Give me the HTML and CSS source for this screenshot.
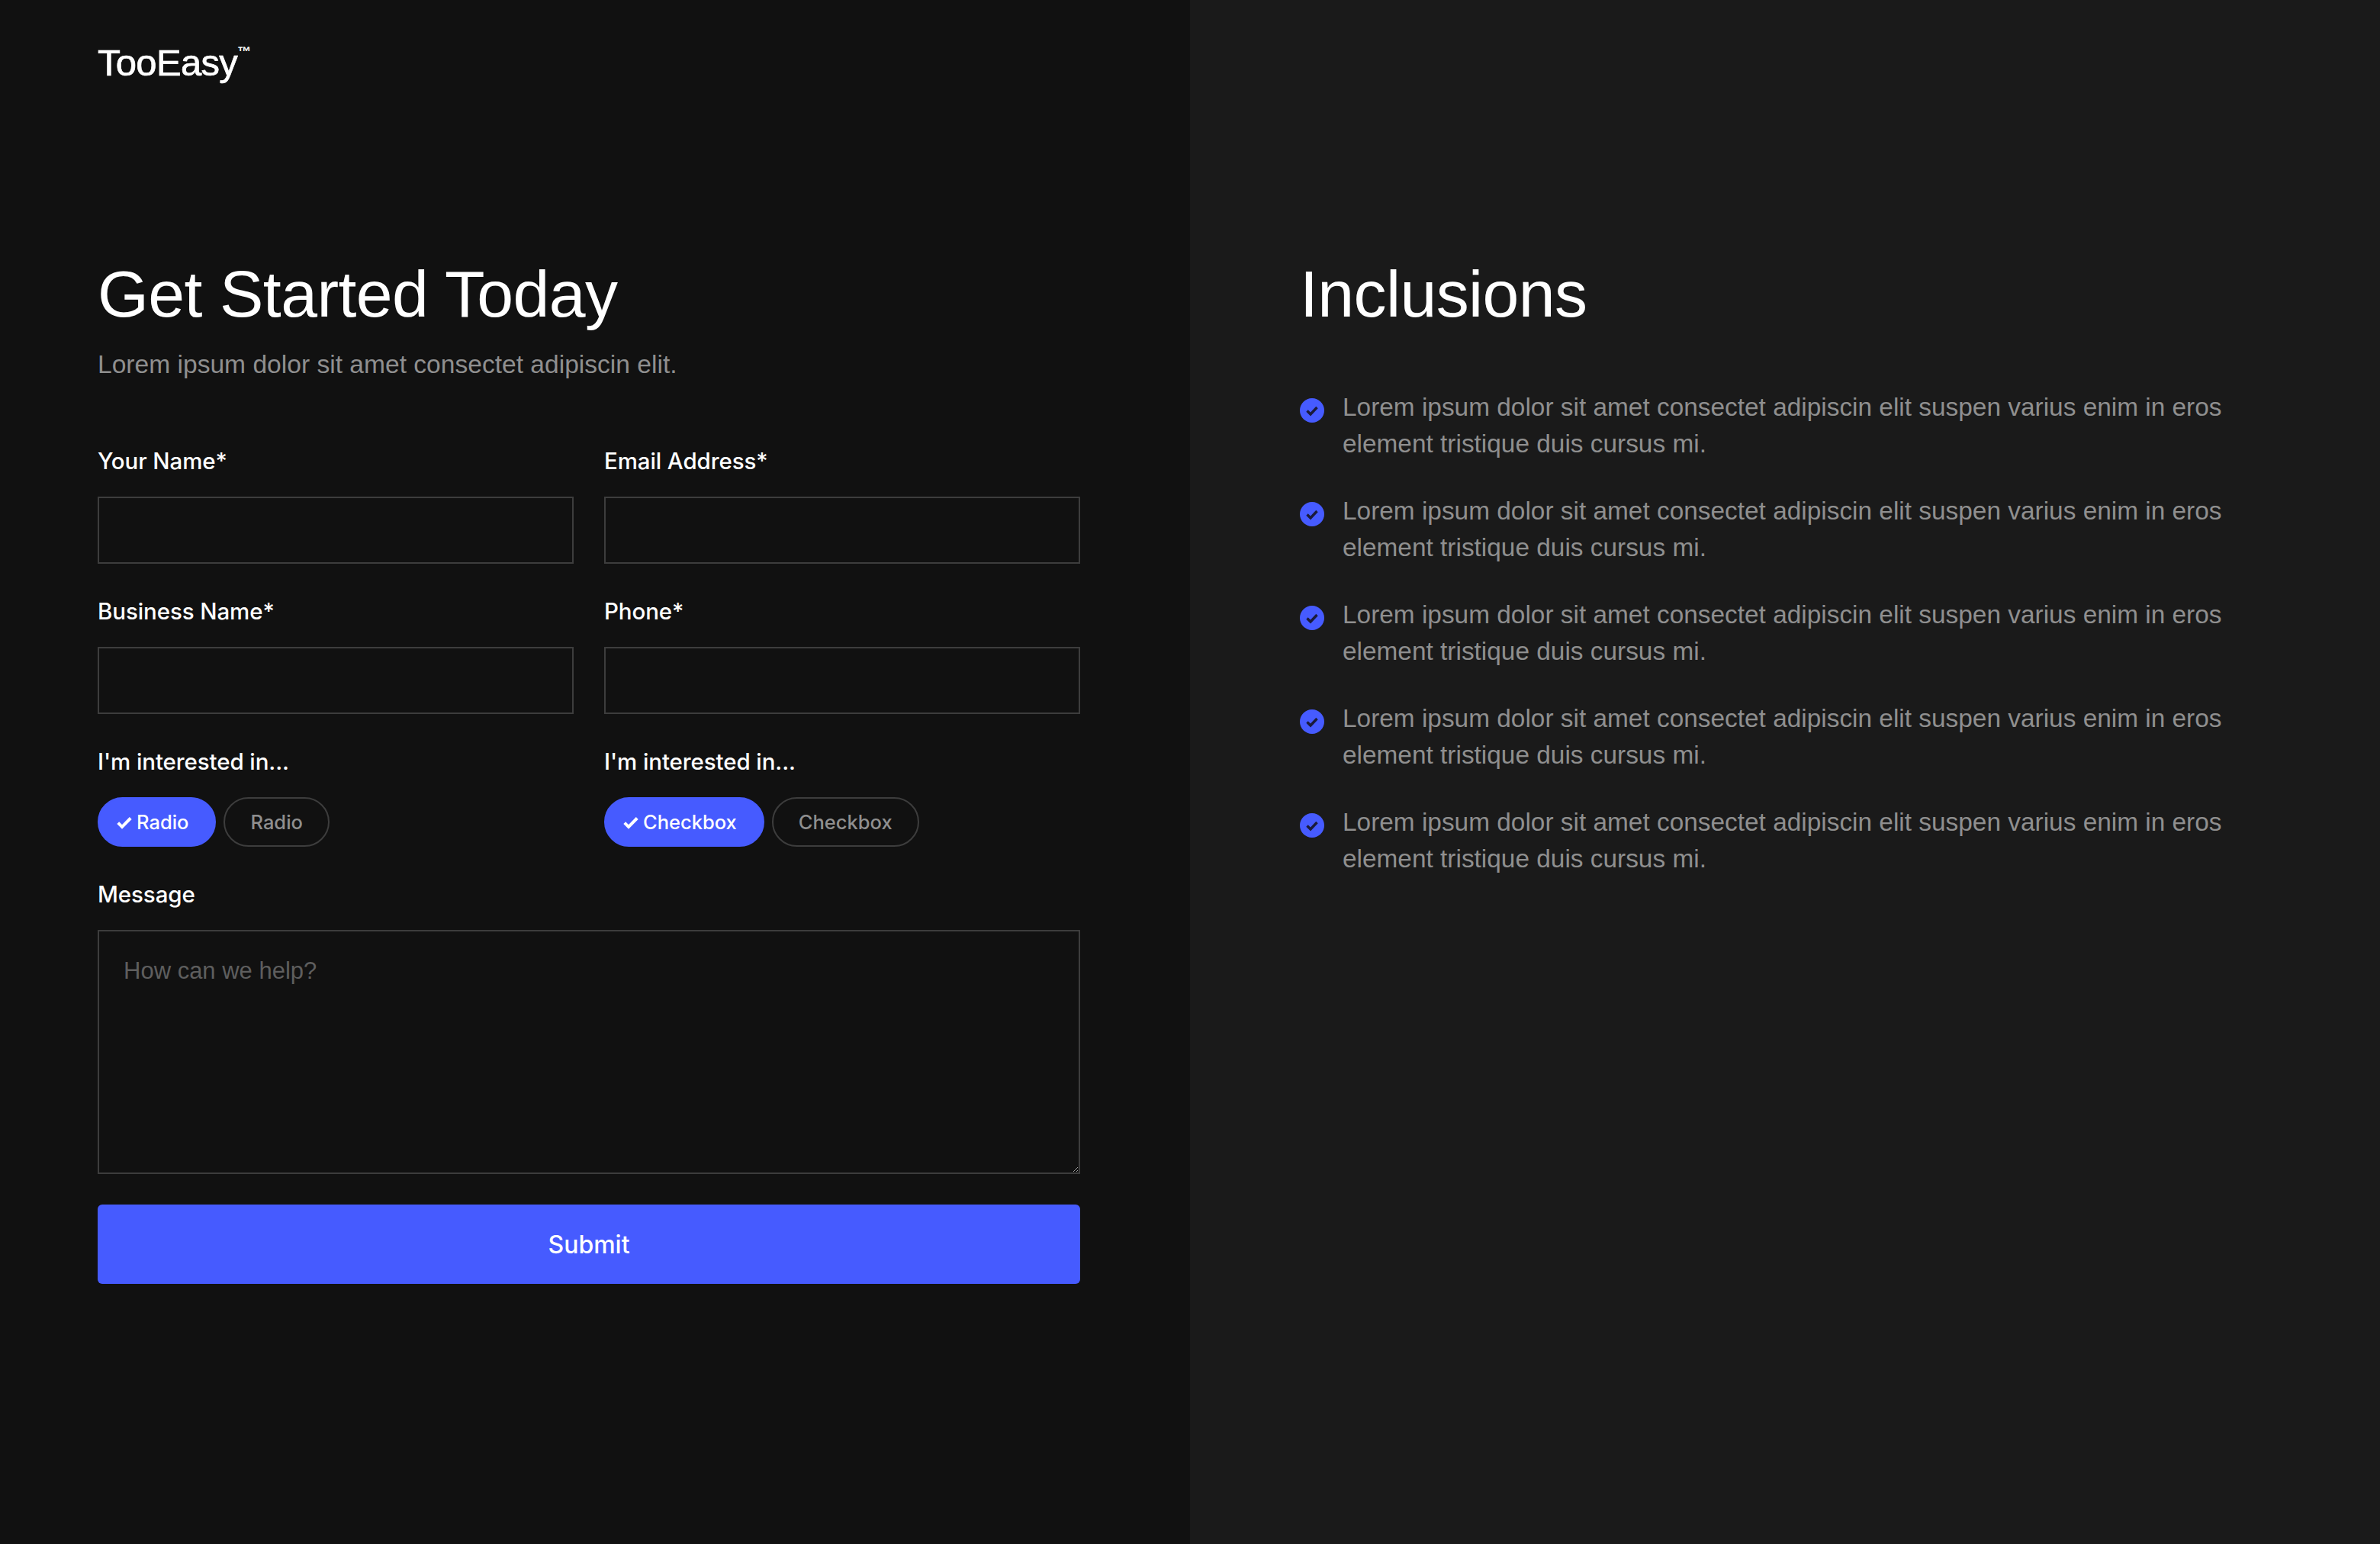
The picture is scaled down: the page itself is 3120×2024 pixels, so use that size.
FILE: index.html
```html
<!DOCTYPE html>
<html lang="en">
<head>
<meta charset="utf-8">
<title>TooEasy</title>
<link rel="stylesheet" href="styles.css">
</head>
<body>
<main class="page">
  <section class="left">
    <div class="logo">TooEasy<sup class="tm">™</sup></div>
    <h1 class="title">Get Started Today</h1>
    <p class="sub">Lorem ipsum dolor sit amet consectet adipiscin elit.</p>
    <form class="form">
      <div class="grid">
        <div class="field"><label class="label">Your Name*</label><input class="input" type="text"></div>
        <div class="field"><label class="label">Email Address*</label><input class="input" type="text"></div>
        <div class="field"><label class="label">Business Name*</label><input class="input" type="text"></div>
        <div class="field"><label class="label">Phone*</label><input class="input" type="text"></div>
        <div class="field">
          <label class="label">I'm interested in...</label>
          <div class="pills">
            <span class="pill on"><svg class="tick" viewBox="0 0 20 20"><path d="M2.5 10.5l4.8 4.8L17.5 5" fill="none" stroke="#fff" stroke-width="3.6"/></svg>Radio</span>
            <span class="pill">Radio</span>
          </div>
        </div>
        <div class="field">
          <label class="label">I'm interested in...</label>
          <div class="pills">
            <span class="pill on"><svg class="tick" viewBox="0 0 20 20"><path d="M2.5 10.5l4.8 4.8L17.5 5" fill="none" stroke="#fff" stroke-width="3.6"/></svg>Checkbox</span>
            <span class="pill">Checkbox</span>
          </div>
        </div>
      </div>
      <div class="field msg">
        <label class="label">Message</label>
        <textarea class="area" placeholder="How can we help?"></textarea>
      </div>
      <button class="submit" type="button">Submit</button>
    </form>
  </section>
  <section class="right">
    <h2 class="title">Inclusions</h2>
    <ul class="list">
      <li class="item"><svg class="check" viewBox="0 0 32 32"><circle cx="16" cy="16" r="16" fill="#465bff"/><path d="M9.5 16.5l4.5 4.5L22.5 12" fill="none" stroke="#1a1a3a" stroke-width="3.4"/></svg><span>Lorem ipsum dolor sit amet consectet adipiscin elit suspen varius enim in eros element tristique duis cursus mi.</span></li>
      <li class="item"><svg class="check" viewBox="0 0 32 32"><circle cx="16" cy="16" r="16" fill="#465bff"/><path d="M9.5 16.5l4.5 4.5L22.5 12" fill="none" stroke="#1a1a3a" stroke-width="3.4"/></svg><span>Lorem ipsum dolor sit amet consectet adipiscin elit suspen varius enim in eros element tristique duis cursus mi.</span></li>
      <li class="item"><svg class="check" viewBox="0 0 32 32"><circle cx="16" cy="16" r="16" fill="#465bff"/><path d="M9.5 16.5l4.5 4.5L22.5 12" fill="none" stroke="#1a1a3a" stroke-width="3.4"/></svg><span>Lorem ipsum dolor sit amet consectet adipiscin elit suspen varius enim in eros element tristique duis cursus mi.</span></li>
      <li class="item"><svg class="check" viewBox="0 0 32 32"><circle cx="16" cy="16" r="16" fill="#465bff"/><path d="M9.5 16.5l4.5 4.5L22.5 12" fill="none" stroke="#1a1a3a" stroke-width="3.4"/></svg><span>Lorem ipsum dolor sit amet consectet adipiscin elit suspen varius enim in eros element tristique duis cursus mi.</span></li>
      <li class="item"><svg class="check" viewBox="0 0 32 32"><circle cx="16" cy="16" r="16" fill="#465bff"/><path d="M9.5 16.5l4.5 4.5L22.5 12" fill="none" stroke="#1a1a3a" stroke-width="3.4"/></svg><span>Lorem ipsum dolor sit amet consectet adipiscin elit suspen varius enim in eros element tristique duis cursus mi.</span></li>
    </ul>
  </section>
</main>
</body>
</html>
```
FILE: styles.css
```css
* { box-sizing: border-box; }
html, body { margin: 0; height: 100%; }
body { background: #111; color: #fff; font-family: "Liberation Sans", Arial, sans-serif; }
.page { display: grid; grid-template-columns: 1560px 1560px; min-height: 2024px; }
.left { background: #111; padding: 50px 144px 0 128px; }
.right { background: #1a1a1a; padding: 330px 144px 0 144px; }
.logo { font-size: 49px; line-height: 64px; letter-spacing: -0.7px; height: 280px; -webkit-text-stroke: 0.7px #fff; }
.tm { font-size: 18px; vertical-align: 25px; line-height: 0; letter-spacing: 0; font-weight: 700; -webkit-text-stroke: 0; }
.title { margin: 0; font-size: 86px; line-height: 110px; font-weight: 400; letter-spacing: -0.6px; }
.sub { margin: 14px 0 0; font-size: 33.6px; line-height: 48px; color: #8f8f8f; }
.form { margin-top: 78px; }
.grid { display: grid; grid-template-columns: 624px 624px; column-gap: 40px; row-gap: 38px; }
.field { display: flex; flex-direction: column; gap: 23px; }
.label { font-family: Inter, sans-serif; font-size: 29.5px; line-height: 48px; font-weight: 500; letter-spacing: -0.1px; }
.input { height: 88px; background: transparent; border: 2px solid #3d3d3d; border-radius: 0; }
.pills { display: flex; gap: 10px; }
.pill { display: inline-flex; align-items: center; height: 65px; padding: 0 33px; border: 2px solid #3d3d3d; border-radius: 33px; color: #8f8f8f; font-family: Inter, sans-serif; font-size: 25.5px; font-weight: 500; }
.pill.on { background: #465bff; border-color: #465bff; color: #fff; padding: 0 34px 0 22px; gap: 5px; }
.tick { width: 22px; height: 22px; }
.msg { margin-top: 38px; }
.area { display: block; width: 100%; height: 320px; padding: 28px 32px; background: transparent; border: 2px solid #3d3d3d; border-radius: 0; color: #fff; font-family: "Liberation Sans", Arial, sans-serif; font-size: 31px; line-height: 48px; outline: 0; }
.area::placeholder { color: #5e5e5e; opacity: 1; }
.submit { display: block; width: 100%; height: 104px; margin-top: 40px; background: #465bff; border: 0; border-radius: 6px; color: #fff; font-family: Inter, sans-serif; font-size: 32px; font-weight: 500; }
.list { list-style: none; margin: 70px 0 0; padding: 0; display: flex; flex-direction: column; gap: 40px; }
.item { display: flex; gap: 24px; font-size: 33.4px; line-height: 48px; color: #8f8f8f; }
.check { flex: none; width: 32px; height: 32px; margin-top: 12px; }
```
